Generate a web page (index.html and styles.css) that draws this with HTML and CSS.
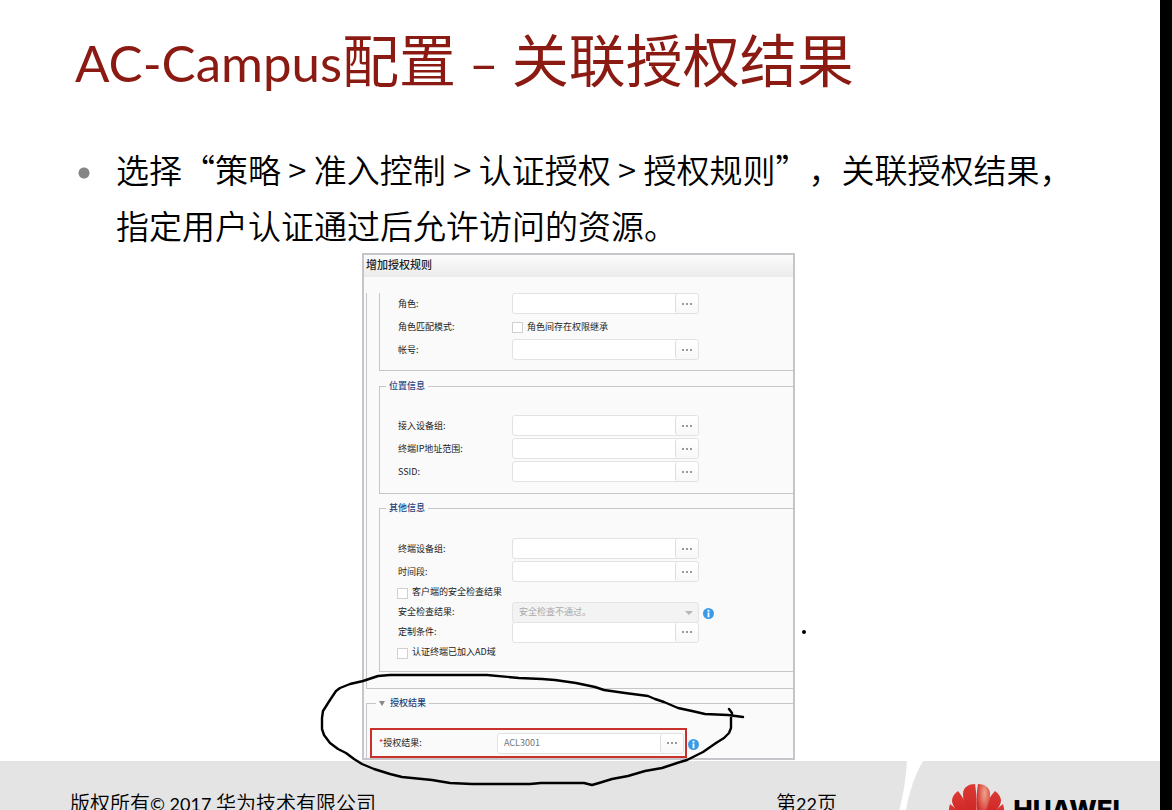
FILE: index.html
```html
<!DOCTYPE html>
<html lang="zh-CN">
<head>
    <meta charset="UTF-8">
    <meta name="viewport" content="width=device-width, initial-scale=1.0">
    <title>AC-Campus配置 – 关联授权结果</title>
    <link rel="stylesheet" href="styles.css">
</head>
<body>
    <div class="slide">
        <h1><span class="latin">AC-Campus</span>配置<span class="latin"> – </span>关联授权结果</h1>
        <ul class="points">
            <li>选择“策略 &gt; 准入控制 &gt; 认证授权 &gt; 授权规则”，关联授权结果，<br>指定用户认证通过后允许访问的资源。</li>
        </ul>

        <div class="stage">
        <div class="dialog">
            <h2>增加授权规则</h2>
            <form class="panel">
                <div class="outer">
                    <div class="group group-open">
                        <div class="row">
                            <label for="role">角色:</label>
                            <span class="picker"><input type="text" id="role"><button type="button" aria-label="选择角色"><i></i></button></span>
                        </div>
                        <div class="row">
                            <span>角色匹配模式:</span>
                            <span class="check"><input type="checkbox" id="inherit"><label for="inherit">角色间存在权限继承</label></span>
                        </div>
                        <div class="row">
                            <label for="account">帐号:</label>
                            <span class="picker"><input type="text" id="account"><button type="button" aria-label="选择帐号"><i></i></button></span>
                        </div>
                    </div>

                    <fieldset class="group">
                        <legend>位置信息</legend>
                        <div class="row">
                            <label for="device">接入设备组:</label>
                            <span class="picker"><input type="text" id="device"><button type="button" aria-label="选择接入设备组"><i></i></button></span>
                        </div>
                        <div class="row">
                            <label for="ip">终端IP地址范围:</label>
                            <span class="picker"><input type="text" id="ip"><button type="button" aria-label="选择终端IP地址范围"><i></i></button></span>
                        </div>
                        <div class="row">
                            <label for="ssid">SSID:</label>
                            <span class="picker"><input type="text" id="ssid"><button type="button" aria-label="选择SSID"><i></i></button></span>
                        </div>
                    </fieldset>

                    <fieldset class="group group-other">
                        <legend>其他信息</legend>
                        <div class="row">
                            <label for="terminal">终端设备组:</label>
                            <span class="picker"><input type="text" id="terminal"><button type="button" aria-label="选择终端设备组"><i></i></button></span>
                        </div>
                        <div class="row row-last">
                            <label for="time">时间段:</label>
                            <span class="picker"><input type="text" id="time"><button type="button" aria-label="选择时间段"><i></i></button></span>
                        </div>
                        <div class="check check-row"><input type="checkbox" id="safe"><label for="safe">客户端的安全检查结果</label></div>
                        <div class="row row-tight">
                            <label for="result">安全检查结果:</label>
                            <span class="drop">
                                <select id="result" disabled><option>安全检查不通过。</option></select>
                            </span>
                            <svg class="info" viewBox="0 0 12 12"><circle cx="6" cy="6" r="6"/><path d="M5 2h2v2H5zM5 5h2v5H5z"/></svg>
                        </div>
                        <div class="row row-tight">
                            <label for="custom">定制条件:</label>
                            <span class="picker"><input type="text" id="custom"><button type="button" aria-label="选择定制条件"><i></i></button></span>
                        </div>
                        <div class="check check-row"><input type="checkbox" id="domain"><label for="domain">认证终端已加入AD域</label></div>
                    </fieldset>
                </div>

                <fieldset class="auth">
                    <legend>授权结果</legend>
                    <div class="auth-row">
                        <div class="required">
                            <label for="acl"><b>*</b>授权结果:</label>
                            <span class="picker"><input type="text" id="acl" value="ACL3001"><button type="button" aria-label="选择授权结果"><i></i></button></span>
                        </div>
                        <svg class="info" viewBox="0 0 12 12"><circle cx="6" cy="6" r="6"/><path d="M5 2h2v2H5zM5 5h2v5H5z"/></svg>
                    </div>
                </fieldset>
            </form>

            <!-- pen marks over the dialog -->
            <svg class="ink" viewBox="318 620 492 170">
                <path d="M743 717L728 715L705 714L692 711L678 708L664 702L655 699L648 696L625 693L604 690L595 687L576 683L555 680L542 679L519 678L487 675H390L378 676L363 681L350 684L340 688L336 691L330 700L323 711L322 718V729L324 735L330 743L338 749L346 753L354 759L362 764L374 769L390 774L402 777L412 778L432 780L450 783L472 784H530L541 783H584L592 785L599 783L612 779L628 776L645 771L662 768L677 763L687 760L703 752L716 743L724 738L729 733L731 728L731 718L732 713L729 709"/>
                <circle cx="804" cy="632" r="2"/>
            </svg>
        </div>
        </div>

        <footer>
            <span class="copyright">版权所有<span class="year">© 2017 </span>华为技术有限公司</span>
            <span class="page">第<span class="year">22</span>页</span>
            <svg class="swoosh" viewBox="0 0 30 60"><path d="M11 0H27C18 16 12 34 8 60H0C6 42 10 20 11 0z"/></svg>
            <div class="brand">
                <svg viewBox="0 0 56 44">
                    <defs>
                        <linearGradient id="petal" x1="0" y1="0" x2="0" y2="1">
                            <stop offset="0" stop-color="#dc3a33"/>
                            <stop offset="1" stop-color="#c81f22"/>
                        </linearGradient>
                        <radialGradient id="shine" cx="0.6" cy="0.25" r="0.6">
                            <stop offset="0" stop-color="#eda58c"/>
                            <stop offset="1" stop-color="#d32d2b"/>
                        </radialGradient>
                    </defs>
                    <g fill="url(#petal)">
                        <path d="M26 38C18 28 14 20 14 10C14 3 20 0 26 0C28 12 28 26 26 38z"/>
                        <path d="M24 39C12 32 4 25 3 17C3 13 5 10 9 7C16 16 21 27 24 39z"/>
                        <path d="M46 7C38 16 33 27 30 39C42 32 51 25 52 17C52 13 50 10 46 7z"/>
                        <path d="M22 41C10 39 3 36 1 31C-1 28 0 24 1 20C10 27 17 34 22 41z"/>
                        <path d="M33 41C45 39 52 36 54 31C56 28 55 24 54 20C45 27 38 34 33 41z"/>
                    </g>
                    <path fill="url(#shine)" d="M29 38C37 28 41 20 41 10C41 3 35 0 29 0C27 12 27 26 29 38z"/>
                </svg>
                <strong>HUAWEI</strong>
            </div>
        </footer>
    </div>
</body>
</html>
```

FILE: styles.css
```css
* {
    box-sizing: border-box;
}
body {
    margin: 0;
    font-family: "Noto Sans CJK SC", sans-serif;
    background: #fff;
    color: #000;
}
.slide {
    height: 100vh;
    overflow: hidden;
    border-right: 12px solid #000;
    display: flex;
    flex-direction: column;
}
h1 {
    margin: 17px 0 0 75px;
    font-size: 57px;
    line-height: 80px;
    font-weight: 400;
    color: #8a1a12;
    white-space: nowrap;
}
.latin {
    font-family: Lato, sans-serif;
    font-size: 51px;
    white-space: pre;
}
.points {
    list-style: none;
    margin: 38px 0 0 78px;
    padding: 0;
    font-size: 33px;
    line-height: 56px;
    font-weight: 350;
    text-spacing-trim: space-all;
}
.points li {
    display: flow-root;
    padding-left: 38px;
    white-space: nowrap;
    background: radial-gradient(circle at 6px 32px, #868686 5px, transparent 6px) no-repeat;
}

/* dialog */
.stage {
    flex: none;
    padding-right: 3px;
}
.dialog {
    position: relative;
    width: 433px;
    margin: 0 auto;
    border: 2px solid #c6c6ca;
    background: #fafafa;
    font-size: 9px;
    line-height: 12px;
    color: #222;
}
h2 {
    margin: 0;
    padding: 0 2px 4px;
    font-size: 11px;
    line-height: 18px;
    font-weight: 500;
    background: linear-gradient(#fcfcfc, #ebebeb);
}
.panel {
    margin: 0;
    padding: 16px 0 0 2px;
}
.outer {
    border: solid #c6c6ca;
    border-width: 0 0 1px 1px;
    padding: 0 0 16px 12px;
}
.group {
    margin: 0 0 7px;
    padding: 22px 0 11px 18px;
    border: 1px solid #c6c6ca;
    border-right: 0;
    min-width: 0;
}
.group-open {
    margin-bottom: 8px;
    border-top: 0;
    padding-top: 0;
    padding-bottom: 10px;
}
.group-other {
    margin-bottom: 0;
    padding-top: 23px;
    padding-bottom: 9px;
}
legend {
    margin-left: -12px;
    padding: 0 3px;
    line-height: 14px;
    font-weight: 500;
    color: #24437c;
}
.row {
    display: flex;
    align-items: center;
    height: 21px;
    margin-bottom: 2px;
}
.row:last-child, .row-last, .row-tight {
    margin-bottom: 0;
}
.row > :first-child {
    width: 114px;
}
.picker {
    display: flex;
    width: 187px;
    height: 21px;
    border: 1px solid #e2e2e2;
    border-radius: 3px;
    background: #fff;
}
.picker input {
    flex: 1;
    min-width: 0;
    border: 0;
    padding: 0 6px;
    background: none;
    font: inherit;
    color: #777;
}
.picker button {
    width: 23px;
    padding: 0;
    border: 0;
    border-left: 1px solid #dedede;
    border-radius: 3px;
    background: linear-gradient(#fff, #f8f8f8);
}
.picker i {
    display: block;
    width: 10px;
    height: 2px;
    margin: 0 auto;
    background: repeating-linear-gradient(90deg, #999 0, #999 2px, transparent 2px, transparent 4px);
}
.check {
    display: flex;
    align-items: center;
    gap: 4px;
}
.check input {
    appearance: none;
    width: 11px;
    height: 11px;
    margin: 2px 0 0;
    border: 1px solid #d0d0d0;
    background: #fff;
}
.check-row {
    height: 20px;
    margin-left: -1px;
}
.row-tight {
    height: 20px;
}
.drop {
    position: relative;
    width: 187px;
}
.drop select {
    appearance: none;
    display: block;
    width: 100%;
    height: 21px;
    padding: 0 6px;
    border: 1px solid #e4e4e4;
    border-radius: 3px;
    background: #f3f3f3;
    font: inherit;
    color: #aaa;
    opacity: 1;
}
.drop::after {
    content: "";
    position: absolute;
    right: 6px;
    top: 9px;
    border: 4px solid transparent;
    border-top-color: #b5b5b5;
    border-bottom: 0;
}
.info {
    width: 11px;
    height: 11px;
    margin: 3px 0 0 4px;
    fill: #fff;
}
.info circle {
    fill: #3a9be8;
}

.auth {
    margin: 7px 0 0;
    padding: 18px 0 0 3px;
    border: solid #c6c6ca;
    border-width: 1px 0 0 1px;
    min-width: 0;
}
.auth legend {
    margin-left: 6px;
    display: flex;
    align-items: center;
    gap: 5px;
}
.auth legend::before {
    content: "";
    border: 3px solid transparent;
    border-top: 5px solid #888;
    border-bottom: 0;
}
.auth-row {
    display: flex;
    align-items: center;
}
.auth .info {
    margin-left: 1px;
}
.required {
    display: flex;
    align-items: center;
    width: 317px;
    height: 30px;
    padding-left: 7px;
    border: 2px solid #c9302c;
}
.required label {
    width: 118px;
}
.required b {
    color: #e02020;
    font-weight: 400;
}
.ink {
    position: absolute;
    z-index: 1;
    left: -46px;
    top: 365px;
    width: 492px;
    height: 170px;
    pointer-events: none;
}
.ink path {
    fill: none;
    stroke: #000;
    stroke-width: 2.4;
    stroke-linejoin: round;
    stroke-linecap: round;
}

/* footer */
footer {
    position: relative;
    flex: none;
    display: flex;
    align-items: flex-start;
    height: 60px;
    margin-top: 1px;
    padding: 0 40px 0 70px;
    background: #e4e4e4;
    font-size: 20px;
    line-height: 30px;
    font-weight: 350;
}
.copyright, .page {
    padding-top: 27px;
}
.copyright {
    width: 706px;
}
.year {
    font-family: Lato, sans-serif;
    font-size: 18px;
    font-weight: 400;
}
.swoosh {
    position: absolute;
    right: 234px;
    top: 0;
    width: 30px;
    height: 60px;
    fill: #fff;
}
.brand {
    display: flex;
    gap: 8px;
    margin-left: auto;
    padding-top: 23px;
}
.brand svg {
    width: 56px;
    height: 44px;
}
.brand strong {
    padding-top: 10px;
    font-family: Inter, sans-serif;
    font-size: 26px;
    line-height: 32px;
    font-weight: 800;
}
```
